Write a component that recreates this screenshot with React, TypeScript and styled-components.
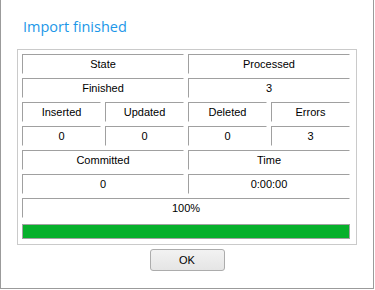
import { createGlobalStyle } from "styled-components"
import styled from "styled-components"

const GlobalStyle = createGlobalStyle`
  html, body {
    margin: 0;
    padding: 0;
    background: #ffffff;
  }
  body {
    font-family: "Liberation Sans", Arial, sans-serif;
  }
`

const Window = styled.div`
  box-sizing: border-box;
  width: 374px;
  height: 289px;
  background: #ffffff;
  border: 1px solid #9b9b9b;
  border-top: none;
  display: flex;
  flex-direction: column;
  align-items: flex-start;
`

const Title = styled.h1`
  margin: 17px 0 0 22px;
  height: 20px;
  font-family: "Open Sans", "Noto Sans", sans-serif;
  font-size: 14.5px;
  font-weight: 400;
  line-height: 20px;
  color: #1c97e8;
`

const GroupBox = styled.div`
  box-sizing: border-box;
  margin: 12px 0 0 16px;
  width: 340px;
  height: 196px;
  padding: 4px 6px 5px 4px;
  border: 1px solid #cacaca;
  display: flex;
  flex-direction: column;
  gap: 6px;
`

const Grid = styled.div`
  display: grid;
  grid-template-columns: repeat(4, 79px);
  grid-auto-rows: 20px;
  gap: 4px;
`

const Cell = styled.div<{ $span: number }>`
  box-sizing: border-box;
  grid-column: span ${(p) => p.$span};
  border-top: 1px solid #a0a0a0;
  border-left: 1px solid #a0a0a0;
  border-right: 1px solid #ffffff;
  border-bottom: 1px solid #ffffff;
  font-size: 11px;
  line-height: 18px;
  text-align: center;
  color: #000000;
`

const Progress = styled.div`
  box-sizing: border-box;
  height: 15px;
  border: 1px solid #a2a2a2;
  background: #e6e6e6;
`

const ProgressFill = styled.div`
  height: 100%;
  background: #06b02b;
`

const ButtonRow = styled.div`
  align-self: stretch;
  display: flex;
  justify-content: center;
  margin-top: 4px;
`

const Button = styled.button`
  box-sizing: border-box;
  width: 75px;
  height: 22px;
  padding: 0;
  border: 1px solid #acacac;
  border-radius: 3px;
  background: linear-gradient(#f2f2f2, #e5e5e5);
  font-family: "Liberation Sans", Arial, sans-serif;
  font-size: 11px;
  color: #000000;
`

type Item = { text: string; span: number }

const rows: Item[][] = [
  [
    { text: "State", span: 2 },
    { text: "Processed", span: 2 },
  ],
  [
    { text: "Finished", span: 2 },
    { text: "3", span: 2 },
  ],
  [
    { text: "Inserted", span: 1 },
    { text: "Updated", span: 1 },
    { text: "Deleted", span: 1 },
    { text: "Errors", span: 1 },
  ],
  [
    { text: "0", span: 1 },
    { text: "0", span: 1 },
    { text: "0", span: 1 },
    { text: "3", span: 1 },
  ],
  [
    { text: "Committed", span: 2 },
    { text: "Time", span: 2 },
  ],
  [
    { text: "0", span: 2 },
    { text: "0:00:00", span: 2 },
  ],
  [{ text: "100%", span: 4 }],
]

export default function App() {
  const percent = 100

  return (
    <>
      <GlobalStyle />
      <Window>
        <Title>Import finished</Title>
        <GroupBox>
          <Grid>
            {rows.flat().map((item, i) => (
              <Cell key={i} $span={item.span}>
                {item.text}
              </Cell>
            ))}
          </Grid>
          <Progress>
            <ProgressFill style={{ width: `${percent}%` }} />
          </Progress>
        </GroupBox>
        <ButtonRow>
          <Button>OK</Button>
        </ButtonRow>
      </Window>
    </>
  )
}
